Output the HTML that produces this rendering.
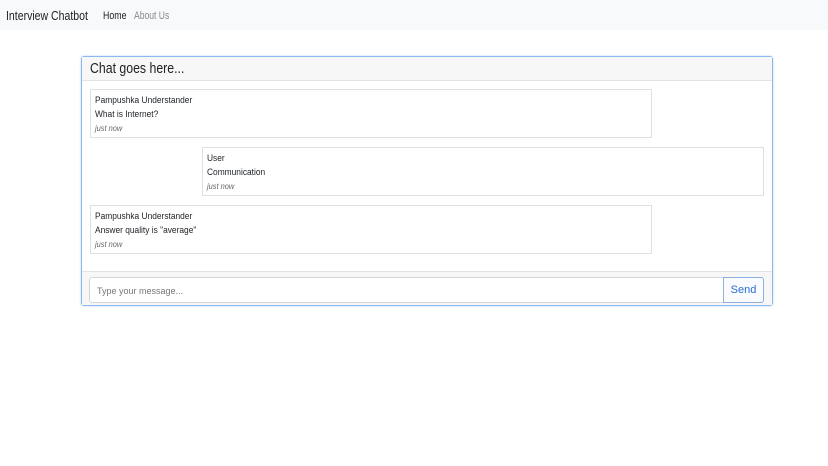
<!DOCTYPE html>
<html><head><style>
*{box-sizing:border-box;margin:0;padding:0}
body{width:828px;height:466px;background:#fff;font-family:"Liberation Sans",sans-serif;color:#212529;position:relative;overflow:hidden}
.nav{position:absolute;left:0;top:0;width:828px;height:30px;background:#f8f9fa}
.s{display:inline-block;transform-origin:0 0;white-space:nowrap}
.brand{position:absolute;left:6px;top:8px;font-size:13px;color:#222;transform:scaleX(.81)}
.l1{position:absolute;left:103px;top:10px;font-size:11px;color:#222;transform:scaleX(.8)}
.l2{position:absolute;left:134px;top:10px;font-size:11px;color:#888;transform:scaleX(.78)}
.card{position:absolute;left:81px;top:56px;width:692px;height:250px;border:1px solid #8cb8ee;border-radius:3px;box-shadow:0 0 2px #b8d4f5}
.hdr{position:absolute;left:0;top:0;width:100%;height:24px;background:#f7f7f7;border-bottom:1px solid #e3e3e3;font-size:15px;padding:3px 8px;color:#222}
.msg{position:absolute;width:562px;height:49px;border:1px solid #e0e0e0;font-size:9px;padding:3px 4px;line-height:14px}
.msg i{color:#666;font-size:8px}
.ftr{position:absolute;left:0;top:214px;width:100%;height:34px;background:#f7f7f7;border-top:1px solid #e3e3e3}
.inp{position:absolute;left:7px;top:5px;width:635px;height:26px;background:#fff;border:1px solid #d6d6d6;border-radius:3px 0 0 3px;font-size:9px;color:#777;padding:8px 7px}
.btn{position:absolute;left:641px;top:5px;width:41px;height:26px;border:1px solid #8cb0e0;border-radius:0 3px 3px 0;font-size:11px;color:#2a6fd0;text-align:center;line-height:24px;background:#f9fbff}
</style></head><body>
<div class="nav"><div class="brand s">Interview Chatbot</div><div class="l1 s">Home</div><div class="l2 s">About Us</div></div>
<div class="card">
<div class="hdr"><span class="s" style="transform:scaleX(.82)">Chat goes here...</span></div>
<div class="msg" style="left:8px;top:32px"><span class="s" style="transform:scaleX(.93)">Pampushka Understander<br>What is Internet?<br><i>just now</i></span></div>
<div class="msg" style="left:120px;top:90px"><span class="s" style="transform:scaleX(.93)">User<br>Communication<br><i>just now</i></span></div>
<div class="msg" style="left:8px;top:148px"><span class="s" style="transform:scaleX(.93)">Pampushka Understander<br>Answer quality is "average"<br><i>just now</i></span></div>
<div class="ftr"><div class="inp">Type your message...</div><div class="btn">Send</div></div>
</div>
</body></html>
